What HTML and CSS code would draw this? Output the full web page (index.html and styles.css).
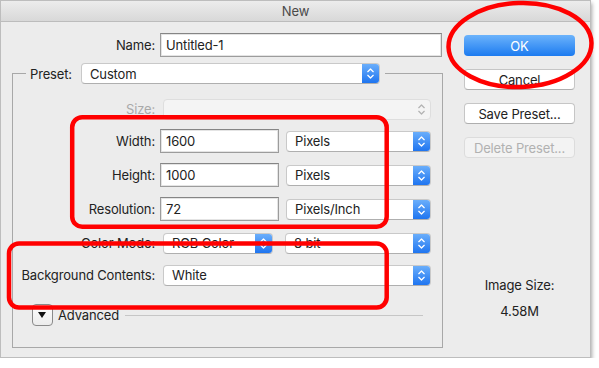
FILE: index.html
```html
<!DOCTYPE html>
<html lang="en">
<head>
    <meta charset="UTF-8">
    <meta name="viewport" content="width=device-width, initial-scale=1.0">
    <title>New</title>
    <link rel="stylesheet" href="styles.css">
</head>
<body>
    <svg class="defs" width="0" height="0">
        <symbol id="chev" viewBox="0 0 17 21">
            <polyline points="5.5,8.5 8.5,5.5 11.5,8.5" fill="none" stroke-width="1.4" stroke-linecap="round" stroke-linejoin="round"/>
            <polyline points="5.5,12.5 8.5,15.5 11.5,12.5" fill="none" stroke-width="1.4" stroke-linecap="round" stroke-linejoin="round"/>
        </symbol>
    </svg>

    <div class="window">
        <div class="titlebar">New</div>
        <div class="content">
            <div class="main">
                <div class="row name-row">
                    <span class="label name-label">Name:</span>
                    <div class="field name-field">Untitled-1</div>
                </div>

                <fieldset class="preset">
                    <legend>
                        <span class="legend-label">Preset:</span>
                        <div class="select preset-select">
                            <span class="value">Custom</span>
                            <span class="stepper"><svg><use href="#chev"/></svg></span>
                        </div>
                    </legend>

                    <div class="row size-row">
                        <span class="label disabled">Size:</span>
                        <div class="select full disabled-select">
                            <span class="value"></span>
                            <span class="stepper grey"><svg><use href="#chev"/></svg></span>
                        </div>
                    </div>

                    <div class="row gap-8">
                        <span class="label">Width:</span>
                        <div class="field num-field">1600</div>
                        <div class="select unit">
                            <span class="value">Pixels</span>
                            <span class="stepper"><svg><use href="#chev"/></svg></span>
                        </div>
                    </div>

                    <div class="row gap-10">
                        <span class="label">Height:</span>
                        <div class="field num-field">1000</div>
                        <div class="select unit">
                            <span class="value">Pixels</span>
                            <span class="stepper"><svg><use href="#chev"/></svg></span>
                        </div>
                    </div>

                    <div class="row gap-10">
                        <span class="label">Resolution:</span>
                        <div class="field num-field">72</div>
                        <div class="select unit">
                            <span class="value">Pixels/Inch</span>
                            <span class="stepper"><svg><use href="#chev"/></svg></span>
                        </div>
                    </div>

                    <div class="row gap-10">
                        <span class="label">Color Mode:</span>
                        <div class="select mode">
                            <span class="value">RGB Color</span>
                            <span class="stepper"><svg><use href="#chev"/></svg></span>
                        </div>
                        <div class="select depth">
                            <span class="value">8 bit</span>
                            <span class="stepper"><svg><use href="#chev"/></svg></span>
                        </div>
                    </div>

                    <div class="row gap-8">
                        <span class="label">Background Contents:</span>
                        <div class="select full">
                            <span class="value">White</span>
                            <span class="stepper"><svg><use href="#chev"/></svg></span>
                        </div>
                    </div>

                    <div class="row advanced-row">
                        <span class="disclosure"></span>
                        <span class="advanced-label">Advanced</span>
                        <span class="rule"></span>
                    </div>
                </fieldset>
            </div>

            <div class="side">
                <div class="button primary">OK</div>
                <div class="button">Cancel</div>
                <div class="button">Save Preset...</div>
                <div class="button disabled-button">Delete Preset...</div>
                <div class="image-size">Image Size:</div>
                <div class="image-value">4.58M</div>
            </div>
        </div>
    </div>

    <svg class="marks" width="599" height="368">
        <ellipse cx="520" cy="45" rx="71.5" ry="42" transform="rotate(-2 520 45)"/>
        <rect x="72.2" y="117.2" width="314.5" height="109.5" rx="10"/>
        <rect x="9" y="243.5" width="377.7" height="64" rx="10"/>
    </svg>
</body>
</html>
```

FILE: styles.css
```css
body {
    margin: 0;
    background: #fff;
    font-family: Inter, "Liberation Sans", sans-serif;
    font-size: 13px;
    letter-spacing: -0.15px;
    color: #222;
    position: relative;
}
.defs {
    position: absolute;
}
.window {
    width: 589px;
    height: 356px;
    border: 1px solid #bdbdbd;
    background: #ececec;
    box-shadow: 1px 3px 4px rgba(0,0,0,0.35);
    display: flex;
    flex-direction: column;
}
.titlebar {
    height: 20px;
    line-height: 20px;
    text-align: center;
    color: #4a4a4a;
    background: linear-gradient(#ececec, #d8d8d8);
    border-bottom: 1px solid #bcbcbc;
}
.content {
    display: flex;
}
.main {
    width: 442px;
}
.row {
    display: flex;
    align-items: center;
    height: 24px;
}
.label {
    width: 129px;
    display: flex;
    justify-content: flex-end;
    flex-shrink: 0;
    white-space: nowrap;
}
.label.disabled {
    color: #a9a9a9;
}
.name-row {
    margin-top: 11px;
}
.name-label {
    width: 154px;
}
.field {
    box-sizing: border-box;
    height: 24px;
    display: flex;
    align-items: center;
    padding-left: 5px;
    background: #fff;
    border: 1px solid #9c9c9c;
    border-top-color: #858585;
    box-shadow: inset 0 0 0 1px #e4e4e4;
}
.name-field {
    width: 282px;
    margin-left: 5px;
}
.num-field {
    width: 119px;
    margin-left: 5px;
}

.preset {
    box-sizing: border-box;
    width: 431px;
    margin: 6px 0 0 11px;
    padding: 0 0 20px 13px;
    border: 1px solid #a8a8a8;
    min-width: 0;
}
.preset legend {
    display: flex;
    align-items: center;
    padding: 0 5px 0 4px;
}
.legend-label {
    width: 51px;
}
.preset-select {
    width: 299px;
}

.select {
    box-sizing: border-box;
    height: 21px;
    display: flex;
    align-items: center;
    background: #fff;
    border: 1px solid #c9c9c9;
    border-bottom-color: #afafaf;
    border-radius: 4px;
    overflow: hidden;
}
.select .value {
    flex: 1;
    padding-left: 8px;
    white-space: nowrap;
}
.stepper {
    width: 17px;
    height: 100%;
    background: linear-gradient(#6aaefb, #1f75f0);
    stroke: #fff;
}
.stepper svg {
    display: block;
    width: 17px;
    height: 19px;
}
.stepper.grey {
    background: transparent;
    stroke: #b3b3b3;
}
.full {
    width: 268px;
    margin-left: 8px;
}
.disabled-select {
    background: #f4f4f4;
    border-color: #dedede;
}
.unit {
    width: 145px;
    margin-left: 7px;
}
.mode {
    width: 110px;
    margin-left: 8px;
}
.depth {
    width: 146px;
    margin-left: 12px;
}

.size-row {
    margin-top: 13px;
}
.gap-8 {
    margin-top: 8px;
}
.gap-10 {
    margin-top: 10px;
}
.advanced-row {
    margin-top: 16px;
}
.disclosure {
    box-sizing: border-box;
    width: 21px;
    height: 22px;
    margin-left: 6px;
    border: 1px solid #8a8a8a;
    border-radius: 4px;
    background: linear-gradient(#fdfdfd, #ececec);
    position: relative;
}
.disclosure::after {
    content: "";
    position: absolute;
    left: 5px;
    top: 7px;
    border-left: 4.5px solid transparent;
    border-right: 4.5px solid transparent;
    border-top: 6px solid #111;
}
.advanced-label {
    margin-left: 5px;
}
.rule {
    flex: 1;
    height: 1px;
    margin: 0 19px 0 6px;
    background: #c6c6c6;
}

.side {
    width: 111px;
    margin-left: 21px;
    display: flex;
    flex-direction: column;
}
.button {
    box-sizing: border-box;
    height: 21px;
    margin-top: 13px;
    display: flex;
    align-items: center;
    justify-content: center;
    background: #fff;
    border: 1px solid #c6c6c6;
    border-bottom-color: #aeaeae;
    border-radius: 4px;
}
.button.primary {
    color: #fff;
    border: none;
    background: linear-gradient(#6cb3fb, #1c7bf0);
}
.disabled-button {
    color: #b1b1b1;
    background: #f3f3f3;
    border-color: #dcdcdc;
}
.image-size {
    margin-top: 119px;
    line-height: 16px;
    text-align: center;
}
.image-value {
    margin-top: 10px;
    line-height: 16px;
    text-align: center;
}

.marks {
    position: absolute;
    left: 0;
    top: 0;
    fill: none;
    stroke: #ff0000;
    stroke-width: 4.5;
}
```
